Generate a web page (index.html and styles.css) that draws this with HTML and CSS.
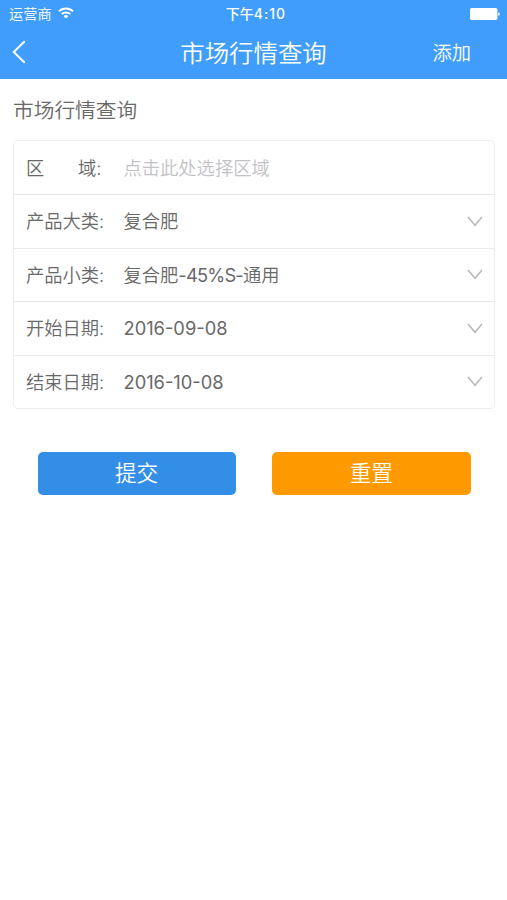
FILE: index.html
```html
<!DOCTYPE html>
<html lang="zh-CN">
<head>
<meta charset="utf-8">
<title>市场行情查询</title>
<link rel="stylesheet" href="styles.css">
</head>
<body>
<header class="top">
  <div class="status">
    <div class="carrier">
      <span>运营商</span>
      <svg class="wifi" width="16" height="12" viewBox="0 0 16 12" fill="none" stroke="#fff" stroke-width="1.9"><path d="M1 4.4a10 10 0 0 1 14 0M3.7 7.2a6.1 6.1 0 0 1 8.6 0"/><path d="M8 11.6 5.6 9.2a3.4 3.4 0 0 1 4.8 0z" fill="#fff" stroke="none"/></svg>
    </div>
    <div class="time">下午<span class="clock">4:10</span></div>
    <svg class="battery" width="30" height="12" viewBox="0 0 30 12" fill="#fff"><rect width="27.4" height="12" rx="1.8"/><path d="M28.2 4.2q1.6.3 1.6 1.8t-1.6 1.8z"/></svg>
  </div>
  <nav class="nav">
    <svg class="back" width="14" height="24" viewBox="0 0 14 24" fill="none" stroke="#fff" stroke-width="1.9"><path d="M12.7 1.3 1.7 12l11 10.7"/></svg>
    <h1 class="title">市场行情查询</h1>
    <span class="add">添加</span>
  </nav>
</header>
<main>
  <h2 class="section">市场行情查询</h2>
  <div class="form">
    <div class="row"><span class="label spread"><span>区</span><span>域:</span></span><span class="value hint">点击此处选择区域</span></div>
    <div class="row"><span class="label">产品大类:</span><span class="value">复合肥</span><svg class="arrow" width="16" height="11" viewBox="0 0 16 11"><path d="M1 1l7 8.300l7-8.300"/></svg></div>
    <div class="row"><span class="label">产品小类:</span><span class="value">复合肥<span class="grade">-45%S-</span>通用</span><svg class="arrow" width="16" height="11" viewBox="0 0 16 11"><path d="M1 1l7 8.300l7-8.300"/></svg></div>
    <div class="row"><span class="label">开始日期:</span><span class="value date">2016-09-08</span><svg class="arrow" width="16" height="11" viewBox="0 0 16 11"><path d="M1 1l7 8.300l7-8.300"/></svg></div>
    <div class="row"><span class="label">结束日期:</span><span class="value date">2016-10-08</span><svg class="arrow" width="16" height="11" viewBox="0 0 16 11"><path d="M1 1l7 8.300l7-8.300"/></svg></div>
  </div>
  <div class="actions">
    <button class="btn submit">提交</button>
    <button class="btn reset">重置</button>
  </div>
</main>
</body>
</html>
```
FILE: styles.css
```css
* { box-sizing: border-box; }
body {
  margin: 0;
  min-height: 900px;
  background: #fff;
  color: #686868;
  font-family: Inter, "Noto Sans CJK SC", sans-serif;
  font-weight: 350;
}
.top { height: 79px; background: #409dfb; color: #fff; }
.status {
  display: grid;
  grid-template-columns: 1fr auto 1fr;
  align-items: center;
  height: 27px;
  padding: 0 7px 0 9px;
  font-size: 14.2px;
  line-height: 27px;
}
.carrier { display: flex; align-items: center; gap: 6px; }
.wifi { margin-top: -2px; }
.time { margin-left: 3px; font-size: 14px; font-weight: 500; }
.clock { letter-spacing: 1px; }
.battery { justify-self: end; }
.nav {
  display: grid;
  grid-template-columns: 1fr auto 1fr;
  align-items: center;
  height: 50px;
  padding: 0 36px 0 12px;
}
.back { margin-top: -1px; }
.title { margin: 1px 0 0 24px; font-size: 24.4px; font-weight: 350; line-height: 50px; }
.add { justify-self: end; margin-top: 1px; font-size: 19.3px; line-height: 50px; }
main { padding: 0 12px 0 13px; }
.section { margin: 0; padding-top: 1px; height: 61px; font-size: 20.7px; font-weight: 350; line-height: 61px; }
.form { height: 269px; border: 1px solid #eee; border-radius: 5px; display: grid; grid-template-rows: 53px repeat(4, 1fr); }
.row { display: flex; align-items: center; padding: 0 11px 0 12px; font-size: 18.3px; line-height: 26px; }
.row + .row { border-top: 1px solid #eaeaea; }
.label { width: 97.5px; flex: none; }
.spread { display: flex; justify-content: space-between; padding-right: 22px; }
.value { flex: 1; }
.date { font-weight: 400; }
.grade { font-weight: 400; letter-spacing: -0.8px; }
.hint { color: #c2c2c6; }
.arrow { fill: none; stroke: #b8b8b8; stroke-width: 1.5; }
.actions { display: flex; gap: 36.5px; margin: 43px 24.5px 0 24.5px; }
.btn {
  flex: 1;
  height: 42.5px;
  padding: 0;
  border: 0;
  border-radius: 5px;
  color: #fff;
  font-family: inherit;
  font-size: 21.6px;
  font-weight: 350;
  line-height: 43px;
}
.submit { background: #328ee6; }
.reset { background: #ff9900; }
```
